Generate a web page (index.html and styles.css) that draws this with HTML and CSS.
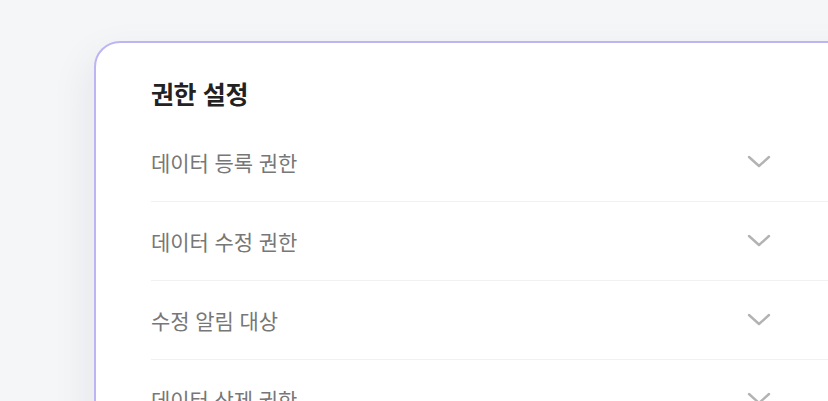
FILE: index.html
```html
<!DOCTYPE html>
<html lang="ko">
<head>
	<meta charset="UTF-8">
	<title>권한 설정</title>
	<link rel="stylesheet" href="styles.css">
</head>
<body>
	<main class="card">
		<h1 class="card-title">권한 설정</h1>
		<ul class="perm-list">
			<li class="perm-row">
				<span class="perm-label">데이터 등록 권한</span>
				<svg class="chevron" viewBox="0 0 24 14" width="24" height="14"><path d="M2 2l10 9 10-9"/></svg>
			</li>
			<li class="perm-row">
				<span class="perm-label">데이터 수정 권한</span>
				<svg class="chevron" viewBox="0 0 24 14" width="24" height="14"><path d="M2 2l10 9 10-9"/></svg>
			</li>
			<li class="perm-row">
				<span class="perm-label">수정 알림 대상</span>
				<svg class="chevron" viewBox="0 0 24 14" width="24" height="14"><path d="M2 2l10 9 10-9"/></svg>
			</li>
			<li class="perm-row">
				<span class="perm-label">데이터 삭제 권한</span>
				<svg class="chevron" viewBox="0 0 24 14" width="24" height="14"><path d="M2 2l10 9 10-9"/></svg>
			</li>
		</ul>
	</main>
</body>
</html>
```

FILE: styles.css
```css
html, body {
	height: 100%;
	margin: 0;
	overflow: hidden;
}
body {
	background: #f5f6f8;
	font-family: "Noto Sans CJK KR", "Noto Sans", sans-serif;
}
main.card {
	background: #fff;
	border: 2px solid #bdb5f3;
	border-radius: 26px;
	box-shadow: -6px 14px 40px rgba(20, 24, 40, .07);
	box-sizing: border-box;
	margin: 41px 0 0 94px;
	padding: 31px 56px 0 55px;
	width: 820px;
}
h1.card-title {
	color: #222;
	font-size: 25px;
	font-weight: 700;
	letter-spacing: -0.4px;
	line-height: 38px;
	margin: 0 0 11px;
}
ul.perm-list {
	list-style: none;
	margin: 0;
	padding: 0;
}
ul.perm-list li.perm-row {
	align-items: center;
	border-bottom: 1.5px solid #f1f1f3;
	display: flex;
	height: 78px;
	justify-content: space-between;
	padding-right: 85px;
}
li.perm-row span.perm-label {
	color: #777;
	font-size: 21px;
	letter-spacing: -0.1px;
}
li.perm-row svg.chevron {
	fill: none;
	stroke: #b3b3b3;
	stroke-linecap: round;
	stroke-linejoin: round;
	stroke-width: 2.4;
}
```
